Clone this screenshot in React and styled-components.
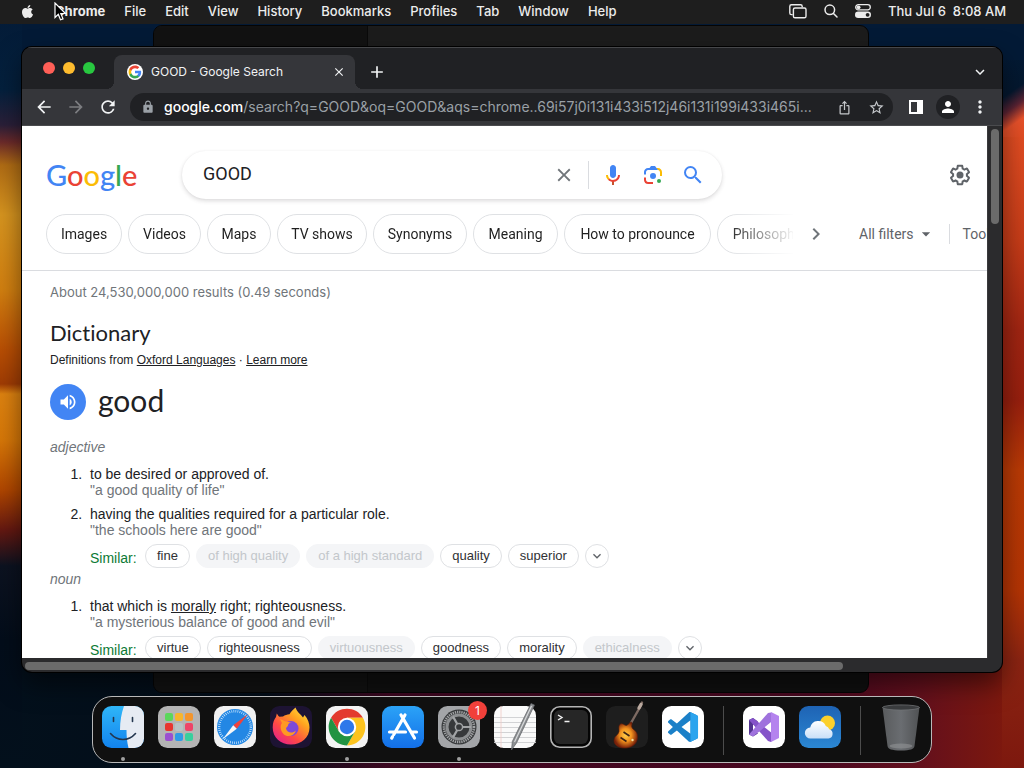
import React from "react";
import styled, { createGlobalStyle, css } from "styled-components";
import { FaApple } from "react-icons/fa";
import {
  MdAdd,
  MdArrowBack,
  MdArrowDropDown,
  MdArrowForward,
  MdClose,
  MdExpandMore,
  MdIosShare,
  MdLock,
  MdMoreVert,
  MdNavigateNext,
  MdPerson,
  MdRefresh,
  MdSearch,
  MdStarBorder,
  MdVolumeUp,
} from "react-icons/md";

const mac = `Inter, "Liberation Sans", sans-serif`;
const product = `Roboto, "Liberation Sans", sans-serif`;
const display = `Lato, "Liberation Sans", sans-serif`;
const arial = `"Liberation Sans", Arial, sans-serif`;

const GlobalStyle = createGlobalStyle`
  *, *::before, *::after { box-sizing: border-box; }
  body { margin: 0; background: #04101f; }
  button, input { font: inherit; color: inherit; }
  button { border: 0; padding: 0; background: none; }
  a { color: inherit; }
  svg { display: block; flex: none; }
`;

/* ---------- desktop ---------- */

const Desktop = styled.div`
  min-height: 100vh;
  display: flex;
  flex-direction: column;
  overflow: hidden;
  font-family: ${mac};
  background:
    linear-gradient(180deg, #031a36 0, #04203d 90px, #2a1f38 125px, #6b2a2a 142px, #b06c14 165px, #d6941f 215px, #d17f10 290px, #b84e04 350px, #a03c04 384px, #dd8210 394px, #d67708 440px, #b04600 490px, #641811 530px, #0c1220 566px, #030d1a 640px, #03101c 100%) left top / 22px 100% no-repeat,
    linear-gradient(180deg, #031a36 0, #031a36 100%) left top / 100% 60px no-repeat,
    linear-gradient(145deg, #031a36 0, #04182f 42px, #5b2333 56px, #e8512a 70px, #e04c22 100%) right 47px / 22px 90px no-repeat,
    linear-gradient(180deg, #031a36 0, #031a36 100px, #e04c22 137px, #c63c18 240px, #a02512 330px, #971f0e 400px, #b93a05 470px, #b43404 590px, #8b2412 660px, #7d180e 100%) right top / 22px 100% no-repeat,
    linear-gradient(90deg, #03101c 0, #030d18 26%, #3c0720 38%, #4a0820 80%, #64101c 90%, #7d180e 98%);
`;

const MenuBar = styled.header`
  height: 24px;
  flex: none;
  display: flex;
  align-items: center;
  justify-content: space-between;
  padding: 0 18px 2px 20px;
  background: #1e1e1e;
  color: #ececec;
  font-size: 13px;
  line-height: 16px;
  font-weight: 500;
  white-space: nowrap;
`;

const MenuList = styled.nav`
  display: flex;
  align-items: center;
  gap: 19px;
`;

const MenuItem = styled.button`
  font-weight: ${(p) => (p.$app ? 700 : 500)};
`;

const AppleMenu = styled(MenuItem)`
  padding-right: 1px;
`;

const StatusList = styled.div`
  display: flex;
  align-items: center;
  gap: 17px;
  white-space: pre;
`;

const Pointer = styled.svg`
  position: absolute;
  left: 54px;
  top: 2px;
  z-index: 5;
`;

const Stage = styled.main`
  position: relative;
  flex: 1;
  display: flex;
  padding: 23px 22px 24px;
`;

const BackWindow = styled.div`
  position: absolute;
  inset: 1px 155px 3px 153px;
  display: flex;
  border-radius: 9px;
  border: 1px solid #050505;
  background: linear-gradient(180deg, #1c1c1c 0, #1c1c1c 60px, #101010 100px);
  overflow: hidden;

  &::before {
    content: "";
    width: 30%;
    background: #121212;
    border-right: 1px solid #0a0a0a;
  }
`;

/* ---------- browser window ---------- */

const Browser = styled.section`
  position: relative;
  flex: 1;
  min-width: 0;
  display: flex;
  flex-direction: column;
  border-radius: 10px;
  overflow: hidden;
  background: #2b2b2d;
  box-shadow: 0 0 0 1px #000, 0 12px 26px rgba(0, 0, 0, 0.5);
`;

const TabStrip = styled.div`
  height: 42px;
  flex: none;
  display: flex;
  align-items: flex-end;
  background: #202124;
  border-top: 1px solid #46474a;
  padding-right: 12px;
`;

const Lights = styled.div`
  display: flex;
  align-self: center;
  gap: 8px;
  width: 92px;
  padding: 0 0 2px 21px;
`;

const Light = styled.button`
  width: 12px;
  height: 12px;
  border-radius: 50%;
  background: ${(p) => p.$color};
`;

const Tab = styled.div`
  position: relative;
  width: 241px;
  height: 34px;
  display: flex;
  align-items: center;
  gap: 8px;
  padding: 0 9px 0 13px;
  border-radius: 8px 8px 0 0;
  background: #35363a;
  color: #f1f3f4;
  font-size: 12px;
  line-height: 16px;

  &::before,
  &::after {
    content: "";
    position: absolute;
    bottom: 0;
    width: 8px;
    height: 8px;
  }
  &::before {
    right: 100%;
    background: radial-gradient(circle at 0 0, transparent 8px, #35363a 8px);
  }
  &::after {
    left: 100%;
    background: radial-gradient(circle at 100% 0, transparent 8px, #35363a 8px);
  }
`;

const Favicon = styled.span`
  width: 16px;
  height: 16px;
  border-radius: 50%;
  display: grid;
  place-items: center;
  background: #fff;
`;

const TabTitle = styled.span`
  flex: 1;
  white-space: nowrap;
`;

const IconButton = styled.button`
  width: ${(p) => p.$size || 24}px;
  height: ${(p) => p.$size || 24}px;
  flex: none;
  display: grid;
  place-items: center;
  border-radius: 50%;
  color: ${(p) => p.$color || "#f1f3f4"};
  background: ${(p) => p.$bg || "none"};
`;

const StripActions = styled.div`
  flex: 1;
  height: 34px;
  display: flex;
  align-items: center;
  justify-content: space-between;
  padding-left: 10px;
`;

const Toolbar = styled.div`
  height: 37px;
  flex: none;
  display: flex;
  align-items: center;
  gap: 8px;
  padding: 0 10px;
  background: #35363a;
  border-bottom: 1px solid #4a4b4e;
`;

const Omnibox = styled.div`
  flex: 1;
  min-width: 0;
  height: 28px;
  display: flex;
  align-items: center;
  margin: 0 3px 0 2px;
  padding: 0 5px 0 11px;
  border-radius: 14px;
  background: #202124;
  font-size: 14px;
  line-height: 20px;
`;

const Host = styled.label`
  padding-left: 9px;
  color: #fff;
  font-weight: 500;
`;

const UrlInput = styled.input`
  flex: 1;
  min-width: 0;
  margin-right: 8px;
  padding: 0;
  border: 0;
  outline: 0;
  background: none;
  color: #9aa0a6;
  text-overflow: ellipsis;
`;

const OmniActions = styled.div`
  display: flex;
  gap: 8px;
`;

const Viewport = styled.div`
  flex: 1;
  min-height: 0;
  display: grid;
  grid-template: minmax(0, 1fr) 14px / minmax(0, 1fr) 15px;
`;

const VTrack = styled.div`
  padding: 3px 3px 0;
  border-left: 1px solid #3a3a3c;
  &::before {
    content: "";
    display: block;
    height: 18%;
    border-radius: 4px;
    background: #6b6b6b;
  }
`;

const HTrack = styled.div`
  grid-column: 1 / -1;
  padding: 4px 3px 2px;
  &::before {
    content: "";
    display: block;
    width: 84%;
    height: 8px;
    border-radius: 4px;
    background: #6b6b6b;
  }
`;

/* ---------- results page ---------- */

const Page = styled.div`
  background: #fff;
  overflow: hidden;
  color: #202124;
  height: 532px;
  min-height: 100%;
`;

const PageHeader = styled.div`
  border-bottom: 1px solid #dadce0;
  padding: 25px 0 16px 24px;
`;

const SearchRow = styled.div`
  display: flex;
  align-items: center;
  padding-right: 15px;
`;

const Logo = styled.a`
  width: 136px;
  font-family: ${display};
  font-size: 29px;
  font-weight: 500;
  line-height: 40px;
  text-decoration: none;
`;

const Letter = styled.span`
  color: ${(p) => p.$color};
`;

const SearchBox = styled.form`
  width: 540px;
  height: 48px;
  display: flex;
  align-items: center;
  padding: 0 17px 0 21px;
  border-radius: 24px;
  background: #fff;
  box-shadow: 0 2px 4px rgba(64, 60, 67, 0.18), 0 0 2px rgba(64, 60, 67, 0.06);
`;

const SearchInput = styled.input`
  flex: 1;
  min-width: 0;
  padding: 0 0 2px;
  border: 0;
  outline: 0;
  background: none;
  font-family: ${product};
  font-size: 18px;
  line-height: 24px;
`;

const SearchTools = styled.div`
  display: flex;
  align-items: center;
  gap: 16px;
`;

const Divider = styled.span`
  width: 1px;
  height: ${(p) => p.$h}px;
  background: #dadce0;
`;

const SearchDivider = styled(Divider)`
  margin: 0 -4px;
`;

const HeaderEnd = styled.div`
  margin-left: auto;
`;

const FilterRow = styled.div`
  display: flex;
  align-items: center;
  margin-top: 15px;
  font-family: ${product};
  font-size: 14px;
  line-height: 20px;
  color: #5f6368;
  white-space: nowrap;
`;

const ChipScroller = styled.div`
  width: 747px;
  flex: none;
  display: flex;
  gap: 6px;
  overflow: hidden;
  color: #1f1f1f;
  mask-image: linear-gradient(90deg, #000 680px, transparent 750px);
`;

const FilterChip = styled.button`
  flex: none;
  width: ${(p) => p.$w}px;
  height: 40px;
  border: 1px solid #dfe1e4;
  border-radius: 20px;
`;

const FilterTools = styled.div`
  display: flex;
  align-items: center;
  gap: 13px;
  margin-left: 11px;
`;

const AllFilters = styled.button`
  display: flex;
  align-items: center;
  gap: 2px;
  margin-left: 18px;
`;

const Results = styled.div`
  padding: 12px 28px 0;
  font-family: ${arial};
  font-size: 14px;
  line-height: 16px;
`;

const Stats = styled.p`
  margin: 0;
  font-family: ${mac};
  font-size: 13px;
  line-height: 18px;
  color: #70757a;
`;

const SectionTitle = styled.h2`
  margin: 16px 0 0;
  font-family: ${display};
  font-weight: 400;
  font-size: 22px;
  line-height: 32px;
  font-variant-ligatures: none;
`;

const Source = styled.p`
  margin: 3px 0 0;
  font-size: 12px;
  line-height: 16px;
`;

const WordRow = styled.div`
  display: flex;
  align-items: center;
  gap: 12px;
  height: 36px;
  margin-top: 16px;
`;

const Word = styled.h3`
  margin: 0;
  padding-bottom: 4px;
  font-family: ${display};
  font-weight: 400;
  font-size: 30px;
  line-height: 36px;
`;

const PartOfSpeech = styled.p`
  margin: ${(p) => (p.$first ? 19 : 3)}px 0 0;
  font-style: italic;
  color: #70757a;
`;

const Senses = styled.ol`
  margin: 11px 0 0;
  padding: 0 0 0 40px;
`;

const Sense = styled.li`
  &::marker {
    content: counter(list-item) ".\\00a0\\00a0";
  }
  & + & {
    margin-top: 8px;
  }
`;

const Example = styled.div`
  color: #70757a;
`;

const SimilarRow = styled.div`
  display: flex;
  align-items: center;
  gap: 6px;
  margin-top: 6px;
`;

const SimilarLabel = styled.span`
  width: 49px;
  padding-top: 4px;
  color: #0d7a35;
`;

const muted = css`
  color: #c3c7cb;
  background: #f4f5f7;
  border-color: #f4f5f7;
`;

const WordChip = styled.button`
  height: 24px;
  padding: 0 11px;
  border: 1px solid #dfe1e4;
  border-radius: 12px;
  font-size: 13px;
  line-height: 16px;
  color: #303134;
  ${(p) => p.$muted && muted}
`;

const MoreChip = styled.button`
  width: 24px;
  height: 24px;
  display: grid;
  place-items: center;
  border: 1px solid #dfe1e4;
  border-radius: 50%;
  color: #5f6368;
`;

/* ---------- dock ---------- */

const Dock = styled.nav`
  position: relative;
  align-self: center;
  flex: none;
  display: flex;
  gap: 14px;
  height: 67px;
  margin: 0 0 5px;
  padding: 9px 9px 0;
  border: 1px solid #b9b9b9;
  border-radius: 20px;
  background: #101010;
`;

const DockApp = styled.button`
  position: relative;
  width: 42px;
  height: 42px;
`;

const RunningDot = styled.span`
  position: absolute;
  left: 19px;
  top: 51px;
  width: 4px;
  height: 4px;
  border-radius: 50%;
  background: #a0a0a0;
`;

const Badge = styled.span`
  position: absolute;
  right: -7px;
  top: -5px;
  width: 19px;
  height: 19px;
  border-radius: 50%;
  background: #f1403a;
  color: #fff;
  font-size: 12px;
  line-height: 19px;
  text-align: center;
`;

const DockRule = styled.span`
  width: 1px;
  height: 49px;
  margin: 0 5px;
  background: #4c4c4c;
`;

/* ---------- drawings ---------- */

const GoogleG = ({ size }) => (
  <svg width={size} height={size} viewBox="0 0 24 24">
    <path fill="#4285F4" d="M22.56 12.25c0-.78-.07-1.53-.2-2.25H12v4.26h5.92c-.26 1.37-1.04 2.53-2.21 3.31v2.77h3.57c2.08-1.92 3.28-4.74 3.28-8.09z" />
    <path fill="#34A853" d="M12 23c2.97 0 5.46-.98 7.28-2.66l-3.57-2.77c-.98.66-2.23 1.06-3.71 1.06-2.86 0-5.29-1.93-6.16-4.53H2.18v2.84C3.99 20.53 7.7 23 12 23z" />
    <path fill="#FBBC05" d="M5.84 14.09c-.22-.69-.35-1.36-.35-2.09s.13-1.43.35-2.09V7.07H2.18C1.43 8.55 1 10.22 1 12s.43 3.45 1.18 4.93l2.85-2.22.81-.62z" />
    <path fill="#EA4335" d="M12 5.38c1.62 0 3.06.56 4.21 1.64l3.15-3.15C17.45 2.09 14.97 1 12 1 7.7 1 3.99 3.47 2.18 7.07l3.66 2.84c.87-2.6 3.3-4.53 6.16-4.53z" />
  </svg>
);

const MicIcon = () => (
  <svg width="24" height="24" viewBox="0 0 24 24">
    <path fill="#4285f4" d="m12 15c1.66 0 3-1.31 3-2.97v-7.02c0-1.66-1.34-3.01-3-3.01s-3 1.34-3 3.01v7.02c0 1.66 1.34 2.97 3 2.97z" />
    <path fill="#c5532d" d="m11 18.08h2v3.92h-2z" />
    <path fill="#fbbc04" d="m7.05 16.87c-1.27-1.33-2.05-2.83-2.05-4.87h2c0 1.45 0.56 2.42 1.47 3.38v0.32l-1.15 1.18z" />
    <path fill="#ea4335" d="m12 16.93a4.97 5.25 0 0 1 -3.54 -1.55l-1.41 1.49c1.26 1.34 3.02 2.13 4.95 2.13 3.87 0 6.99-2.92 6.99-7h-1.99c0 2.92-2.24 4.93-5 4.93z" />
  </svg>
);

const LensIcon = () => (
  <svg width="24" height="24" viewBox="0 0 192 192">
    <circle fill="#34a853" cx="144.07" cy="144" r="16" />
    <circle fill="#4285f4" cx="96.07" cy="104" r="24" />
    <path fill="#ea4335" d="M24,135.2c0,18.11,14.69,32.8,32.8,32.8H96v-16l-40.1-0.1c-8.8,0-15.9-8.19-15.9-17.9v-18H24V135.2z" />
    <path fill="#fbbc04" d="M168,72.8c0-18.11-14.69-32.8-32.8-32.8H116l20,16c8.8,0,16,8.29,16,18v30h16V72.8z" />
    <path fill="#4285f4" d="M112,24l-32,0L68,40H56.8C38.69,40,24,54.69,24,72.8V92h16V74c0-9.71,7.2-18,16-18h80L124,40L112,24z" />
  </svg>
);

const GearIcon = () => (
  <svg width="24" height="24" viewBox="0 0 24 24" fill="currentColor">
    <path d="M13.85 22.25h-3.7c-.74 0-1.36-.54-1.45-1.27l-.27-1.89c-.27-.14-.53-.29-.79-.46l-1.8.72c-.7.26-1.47-.03-1.81-.65L2.2 15.53c-.35-.66-.2-1.44.36-1.88l1.53-1.19c-.01-.15-.02-.3-.02-.46 0-.15.01-.31.02-.46l-1.52-1.19c-.59-.45-.74-1.26-.37-1.88l1.85-3.19c.34-.62 1.11-.9 1.79-.63l1.81.73c.26-.17.52-.32.78-.46l.27-1.91c.09-.7.71-1.25 1.44-1.25h3.7c.74 0 1.36.54 1.45 1.27l.27 1.89c.27.14.53.29.79.46l1.8-.72c.71-.26 1.48.03 1.82.65l1.84 3.18c.36.66.2 1.44-.36 1.88l-1.52 1.19c.01.15.02.3.02.46s-.01.31-.02.46l1.52 1.19c.56.45.72 1.23.37 1.86l-1.86 3.22c-.34.62-1.11.9-1.8.63l-1.8-.72c-.26.17-.52.32-.78.46l-.27 1.91c-.1.68-.72 1.22-1.46 1.22zm-3.23-2h2.76l.37-2.55.53-.22c.44-.18.88-.44 1.34-.78l.45-.34 2.38.96 1.38-2.4-2.03-1.58.07-.56c.03-.26.06-.51.06-.78s-.03-.53-.06-.78l-.07-.56 2.03-1.58-1.39-2.4-2.39.96-.45-.35c-.42-.32-.87-.58-1.33-.77l-.52-.22-.37-2.55h-2.76l-.37 2.55-.53.21c-.44.19-.88.44-1.34.79l-.45.33-2.38-.95-1.39 2.39 2.03 1.58-.07.56a7 7 0 0 0-.06.79c0 .26.02.53.06.78l.07.56-2.03 1.58 1.38 2.4 2.39-.96.45.35c.43.33.86.58 1.33.77l.53.22.38 2.55z" />
    <circle cx="12" cy="12" r="3.5" />
  </svg>
);

const StackIcon = () => (
  <svg width="18" height="15" viewBox="0 0 18 15" fill="none" stroke="#ececec" strokeWidth="1.4">
    <path d="M3.6 10.6H2.4C1.4 10.6.8 10 .8 9V2.400C.8 1.400 1.400.8 2.400.8h9.200c1 0 1.600.6 1.600 1.600v.8" />
    <rect x="4.400" y="4" width="12.600" height="9.800" rx="1.600" />
  </svg>
);

const ControlIcon = () => (
  <svg width="16" height="14" viewBox="0 0 16 14">
    <rect x=".7" y=".7" width="14.600" height="5.200" rx="2.600" fill="none" stroke="#ececec" strokeWidth="1.300" />
    <circle cx="3.600" cy="3.300" r="1.900" fill="#ececec" />
    <rect x="0" y="7.600" width="16" height="6.400" rx="3.200" fill="#ececec" />
    <circle cx="12.600" cy="10.800" r="1.900" fill="#1e1e1e" />
  </svg>
);

const MagnifierIcon = () => (
  <svg width="14" height="14" viewBox="0 0 14 14" fill="none" stroke="#ececec" strokeWidth="1.500" strokeLinecap="round">
    <circle cx="5.800" cy="5.800" r="4.800" />
    <path d="M9.500 9.500 13 13" />
  </svg>
);

const SidePanelIcon = () => (
  <svg width="14" height="14" viewBox="0 0 14 14">
    <path fill="#fff" fillRule="evenodd" d="M0 0h14v14H0zM2 2v10h6V2z" />
  </svg>
);

const PointerIcon = () => (
  <Pointer width="13" height="20" viewBox="0 0 13 20">
    <path d="M1 1v14.500l3.300-3.100 2.200 5.400 2.500-1-2.200-5.300h4.700z" fill="#000" stroke="#fff" strokeWidth="1.200" />
  </Pointer>
);

const Art = ({ children }) => (
  <svg width="42" height="42" viewBox="0 0 42 42" overflow="visible">
    {children}
  </svg>
);

const FinderArt = () => (
  <Art>
    <defs>
      <linearGradient id="finderBlue" x2="0" y2="1"><stop stopColor="#2fb6f8" /><stop offset="1" stopColor="#1283ee" /></linearGradient>
      <clipPath id="finderClip"><rect width="42" height="42" rx="9.500" /></clipPath>
    </defs>
    <g clipPath="url(#finderClip)">
      <rect width="42" height="42" fill="url(#finderBlue)" />
      <path d="M22 0c-2.500 7-4 15-4 24h6.500c0 6 .5 12 2 18H42V0z" fill="#e6ebf3" />
      <path d="M11.500 11.500v4M30.500 11.500v4" stroke="#23364e" strokeWidth="1.600" strokeLinecap="round" />
      <path d="M8.500 27.500c7 8 18 8 25 0" fill="none" stroke="#23364e" strokeWidth="1.600" strokeLinecap="round" />
    </g>
  </Art>
);

const tiles = ["#5bd75b", "#f7b52c", "#f3952c", "#e8352f", "#b8c2c4", "#ee4468", "#9b4fd0", "#2f9be6", "#38cf9d"];

const LaunchpadArt = () => (
  <Art>
    <rect width="42" height="42" rx="9.500" fill="#b4b4b4" />
    {tiles.map((c, i) => (
      <rect key={c} x={7 + (i % 3) * 10} y={7 + Math.floor(i / 3) * 10} width="8" height="8" rx="2" fill={c} />
    ))}
  </Art>
);

const SafariArt = () => (
  <Art>
    <rect width="42" height="42" rx="9.500" fill="#f1f1f1" />
    <circle cx="21" cy="21" r="18" fill="#2387e4" />
    <circle cx="21" cy="21" r="15.800" fill="none" stroke="#d5ecff" strokeWidth="2.400" strokeDasharray=".7 1.370" />
    <path d="M34 8 22.800 22.800 19.200 19.200z" fill="#f0423c" />
    <path d="M8.500 33.500 19.200 19.200l3.600 3.600z" fill="#f7f7f7" />
  </Art>
);

const FirefoxArt = () => (
  <Art>
    <defs>
      <linearGradient id="foxFire" x1="1" x2=".2" y2="1"><stop stopColor="#fff04a" /><stop offset=".35" stopColor="#ffa51f" /><stop offset=".7" stopColor="#ff4a45" /><stop offset="1" stopColor="#e5208a" /></linearGradient>
    </defs>
    <rect width="42" height="42" rx="9.500" fill="#1d1333" />
    <path d="M25.500 1.500c1.500 4.500 5 6.500 7.500 10l1.500-2.500c3.500 4 5 8.500 5 12.500 0 10-8 17-18.500 17S2.700 31.500 2.700 21.500c0-5 1.500-8 3.300-10.500l.8-3.500c1 1.500 1.600 2.500 2.700 3.300l3.500-.3c2-1.300 4-2 6.500-2.200 1.500-3 4-5 6-6.800z" fill="url(#foxFire)" />
    <circle cx="21" cy="22.500" r="7.500" fill="#8147d8" />
    <path d="M10 13c4 1.500 6 3 12 3.500-1 3-5 3-6 6 1 5 7 5 10 2-2 6-9 7-12.500 3.500C10 24.500 10 19 12 17z" fill="#ff9a22" />
    <circle cx="22" cy="20.500" r="4.200" fill="#7c4ad9" />
  </Art>
);

const ChromeArt = () => (
  <Art>
    <rect width="42" height="42" rx="9.500" fill="#f3f3f3" />
    <g transform="translate(21 21)">
      <path d="M-15.900-9.200A18.400 18.400 0 0 1 15.900-9.200L0-9.200-8 4.600z" fill="#e33b2e" />
      <path d="M15.900-9.200A18.400 18.400 0 0 1 0 18.400L8 4.600 0-9.200z" fill="#fcc31e" />
      <path d="M0 18.400A18.400 18.400 0 0 1-15.900-9.200L-8 4.600 8 4.600z" fill="#229342" />
      <circle r="9.200" fill="#fff" />
      <circle r="7.200" fill="#2d78ea" />
    </g>
  </Art>
);

const AppStoreArt = () => (
  <Art>
    <defs>
      <linearGradient id="storeBlue" x2="0" y2="1"><stop stopColor="#2ba3f7" /><stop offset="1" stopColor="#136fe8" /></linearGradient>
    </defs>
    <rect width="42" height="42" rx="9.500" fill="url(#storeBlue)" />
    <g stroke="#fff" strokeWidth="3.200" strokeLinecap="round">
      <path d="M23 9 11.800 28.500M19 9l13.500 23M7.500 26h16M29.500 26h5M10.500 30.700l-.8 1.400" />
    </g>
  </Art>
);

const SettingsArt = () => (
  <Art>
    <rect width="42" height="42" rx="9.500" fill="#a3a5a8" />
    <circle cx="21" cy="21" r="17.500" fill="#37393b" />
    <circle cx="21" cy="21" r="15" fill="none" stroke="#a2a4a6" strokeWidth="2.600" strokeDasharray="1.300 .9" />
    <circle cx="21" cy="21" r="12" fill="none" stroke="#8d8f91" strokeWidth="3" />
    <path d="M21 21 15 10.600M21 21 15 31.400M21 21h12" stroke="#a2a4a6" strokeWidth="2.200" />
    <circle cx="21" cy="21" r="3.600" fill="#37393b" stroke="#a2a4a6" strokeWidth="1.500" />
  </Art>
);

const TextEditArt = () => (
  <Art>
    <rect width="42" height="42" rx="9.500" fill="#fafafa" />
    <path d="M0 11.500h42M0 16.500h42M0 21.500h42M0 26.500h42M0 31.500h42M0 36.500h42" stroke="#cdced0" strokeWidth=".9" />
    <path d="M7 0v42" stroke="#efc9c4" strokeWidth=".8" />
    <path d="M37-2.500 40.500-1 22.500 37l-5 7 .8-8.500z" fill="#8c8f92" stroke="#5f6265" strokeWidth=".7" />
    <path d="M37.500 0 20.500 36" stroke="#d8dadc" strokeWidth="1.200" />
  </Art>
);

const TerminalArt = () => (
  <Art>
    <rect x=".8" y=".8" width="40.400" height="40.400" rx="9" fill="#050505" stroke="#b5b5b5" strokeWidth="1.600" />
    <rect x="4" y="4" width="34" height="34" rx="6" fill="#262626" />
    <path d="m8 9 4 2.500L8 14M14.500 15.500h5" fill="none" stroke="#f2f2f2" strokeWidth="1.400" />
  </Art>
);

const GarageArt = () => (
  <Art>
    <defs>
      <radialGradient id="guitar"><stop stopColor="#ffd04a" /><stop offset=".5" stopColor="#f2911e" /><stop offset="1" stopColor="#7a220a" /></radialGradient>
    </defs>
    <rect width="42" height="42" rx="9.500" fill="#1e1e1e" />
    <path d="M36-3.500 33.500 2 21 24" fill="none" stroke="#7d6a62" strokeWidth="2.400" strokeLinecap="round" />
    <path d="M35-1.500 33 2" stroke="#b9a89e" strokeWidth="3.400" strokeLinecap="round" />
    <path d="M14.500 18c2.500-1 3.500 1.500 6 1.500 1.500 0 2.500-3 5-3.500 1.500 2-1 4 1 6.500 2 2 5 3 5 8.500 0 6.500-5 10.500-11.500 11-6.500.5-12-2.500-12-7.500 0-4.500 4.500-5.500 5-9 .3-2.500-1-6 1.500-7.500z" fill="url(#guitar)" stroke="#5c1c08" strokeWidth=".6" />
    <path d="m17.500 26 6 4M14.500 31.500l6 4" stroke="#3d2316" strokeWidth="1.600" />
    <circle cx="26.500" cy="34" r="1.200" fill="#f5e3a5" />
  </Art>
);

const VSCodeArt = () => (
  <Art>
    <rect width="42" height="42" rx="9.500" fill="#fff" />
    <g transform="translate(6 6) scale(.3)">
      <path fillRule="evenodd" fill="#1b80c8" d="M71 99.300c1.600.6 3.400.6 5-.2l20.600-9.900c2.100-1 3.500-3.200 3.500-5.600V16.400c0-2.400-1.400-4.600-3.500-5.600L76 .9c-2.100-1-4.500-.8-6.400.6L29.600 38 12.200 24.800c-1.600-1.200-3.900-1.100-5.400.2L1.200 30c-1.800 1.700-1.800 4.500 0 6.200L16.300 50 1.200 63.800c-1.800 1.700-1.800 4.500 0 6.200l5.600 5.100c1.500 1.400 3.800 1.500 5.400.2L29.600 62 69 98.100c.6.5 1.300 1 2 1.200zM75 27.300 45.100 50 75 72.700z" />
      <path fill="#2ba4ee" d="M75 1v98l21.600-9.800c2.100-1 3.500-3.200 3.500-5.600V16.400c0-2.400-1.400-4.600-3.500-5.600z" />
    </g>
  </Art>
);

const VisualStudioArt = () => (
  <Art>
    <rect width="42" height="42" rx="9.500" fill="#fff" />
    <path d="m6 14 4-2 5 3.500-5 3.500v5l5 3.500-5 3-4-2z" fill="#52338f" />
    <path d="M6 14 10 12 32 29.500 28 36 25 35z" fill="#8553c9" />
    <path d="m6 28.500 4 2L32 13 28 6.500 25 7z" fill="#9f72dd" />
    <path d="m28 6 8 4v22l-8 4z" fill="#b483ee" />
    <path d="M28 16.500v9L22.500 21z" fill="#fff" />
  </Art>
);

const WeatherArt = () => (
  <Art>
    <defs>
      <linearGradient id="sky" x2="0" y2="1"><stop stopColor="#1e63b4" /><stop offset="1" stopColor="#2b87d3" /></linearGradient>
      <linearGradient id="cloud" x2="0" y2="1"><stop stopColor="#fff" /><stop offset="1" stopColor="#c9dff8" /></linearGradient>
    </defs>
    <rect width="42" height="42" rx="9.500" fill="url(#sky)" />
    <circle cx="28.500" cy="17" r="7.500" fill="#fbd02c" />
    <path d="M11.500 32.500a5.500 5.500 0 0 1-.3-11 8.200 8.200 0 0 1 15.600-1.500 5 5 0 0 1 3.500 3.200 4.800 4.800 0 0 1-.8 9.300z" fill="url(#cloud)" />
  </Art>
);

const TrashArt = () => (
  <Art>
    <defs>
      <linearGradient id="bin"><stop stopColor="#595b5d" /><stop offset=".5" stopColor="#6a6d71" /><stop offset="1" stopColor="#505254" /></linearGradient>
    </defs>
    <path d="M2.500 1 7.500 40c.4 3 4 4.500 13.500 4.500S34.100 43 34.500 40l5-39z" fill="url(#bin)" />
    <ellipse cx="21" cy="1.500" rx="18.500" ry="2.600" fill="#3a3c3e" stroke="#6f7173" strokeWidth=".8" />
    <ellipse cx="21" cy="40" rx="11.500" ry="2.500" fill="#9a9c9e" opacity=".5" />
  </Art>
);

/* ---------- data ---------- */

const menus = ["File", "Edit", "View", "History", "Bookmarks", "Profiles", "Tab", "Window", "Help"];

const filters = [
  ["Images", 76],
  ["Videos", 73],
  ["Maps", 64],
  ["TV shows", 90],
  ["Synonyms", 94],
  ["Meaning", 85],
  ["How to pronounce", 147],
  ["Philosophy", 100],
];

const logo = [
  ["G", "#4285f4"],
  ["o", "#ea4335"],
  ["o", "#fbbc05"],
  ["g", "#4285f4"],
  ["l", "#34a853"],
  ["e", "#ea4335"],
];

const dockGroups = [
  [
    { name: "Finder", Icon: FinderArt, running: true },
    { name: "Launchpad", Icon: LaunchpadArt },
    { name: "Safari", Icon: SafariArt },
    { name: "Firefox", Icon: FirefoxArt },
    { name: "Chrome", Icon: ChromeArt, running: true },
    { name: "App Store", Icon: AppStoreArt },
    { name: "System Settings", Icon: SettingsArt, running: true, badge: 1 },
    { name: "TextEdit", Icon: TextEditArt },
    { name: "Terminal", Icon: TerminalArt },
    { name: "GarageBand", Icon: GarageArt },
    { name: "Visual Studio Code", Icon: VSCodeArt },
  ],
  [
    { name: "Visual Studio", Icon: VisualStudioArt },
    { name: "Weather", Icon: WeatherArt },
  ],
  [{ name: "Trash", Icon: TrashArt }],
];

const Similar = ({ words }) => (
  <SimilarRow>
    <SimilarLabel>Similar:</SimilarLabel>
    {words.map(([word, off]) => (
      <WordChip key={word} $muted={off} disabled={off}>
        {word}
      </WordChip>
    ))}
    <MoreChip aria-label="More similar words">
      <MdExpandMore size={16} />
    </MoreChip>
  </SimilarRow>
);

export default function App() {
  return (
    <Desktop>
      <GlobalStyle />
      <PointerIcon />
      <MenuBar>
        <MenuList>
          <AppleMenu aria-label="Apple menu">
            <FaApple size={15} />
          </AppleMenu>
          <MenuItem $app>Chrome</MenuItem>
          {menus.map((m) => (
            <MenuItem key={m}>{m}</MenuItem>
          ))}
        </MenuList>
        <StatusList>
          <StackIcon />
          <MagnifierIcon />
          <ControlIcon />
          <span>{"Thu Jul 6  8:08 AM"}</span>
        </StatusList>
      </MenuBar>

      <Stage>
        <BackWindow />
        <Browser>
          <TabStrip>
            <Lights>
              <Light $color="#ff5f57" aria-label="Close window" />
              <Light $color="#febc2e" aria-label="Minimize window" />
              <Light $color="#28c840" aria-label="Zoom window" />
            </Lights>
            <Tab>
              <Favicon>
                <GoogleG size={14} />
              </Favicon>
              <TabTitle>GOOD - Google Search</TabTitle>
              <IconButton $size={14} aria-label="Close tab">
                <MdClose size={14} />
              </IconButton>
            </Tab>
            <StripActions>
              <IconButton aria-label="New tab">
                <MdAdd size={20} />
              </IconButton>
              <IconButton $size={20} aria-label="Search tabs">
                <MdExpandMore size={18} />
              </IconButton>
            </StripActions>
          </TabStrip>

          <Toolbar>
            <IconButton aria-label="Back">
              <MdArrowBack size={20} />
            </IconButton>
            <IconButton aria-label="Forward" $color="#7c7d80">
              <MdArrowForward size={20} />
            </IconButton>
            <IconButton aria-label="Reload">
              <MdRefresh size={20} />
            </IconButton>
            <Omnibox>
              <MdLock size={14} color="#9aa0a6" />
              <Host htmlFor="address">google.com</Host>
              <UrlInput
                id="address"
                defaultValue="/search?q=GOOD&oq=GOOD&aqs=chrome..69i57j0i131i433i512j46i131i199i433i465i..."
              />
              <OmniActions>
                <IconButton aria-label="Share" $color="#c4c7ca">
                  <MdIosShare size={15} />
                </IconButton>
                <IconButton aria-label="Bookmark" $color="#c4c7ca">
                  <MdStarBorder size={17} />
                </IconButton>
              </OmniActions>
            </Omnibox>
            <IconButton aria-label="Side panel">
              <SidePanelIcon />
            </IconButton>
            <IconButton aria-label="Profile" $bg="#202124" $color="#fff">
              <MdPerson size={18} />
            </IconButton>
            <IconButton aria-label="Chrome menu">
              <MdMoreVert size={20} />
            </IconButton>
          </Toolbar>

          <Viewport>
            <Page>
              <PageHeader>
                <SearchRow>
                  <Logo href="#home" aria-label="Google">
                    {logo.map(([l, c], i) => (
                      <Letter key={i} $color={c}>
                        {l}
                      </Letter>
                    ))}
                  </Logo>
                  <SearchBox onSubmit={(e) => e.preventDefault()}>
                    <SearchInput aria-label="Search" defaultValue="GOOD" />
                    <SearchTools>
                      <IconButton type="button" aria-label="Clear" $color="#70757a">
                        <MdClose size={22} />
                      </IconButton>
                      <SearchDivider $h={28} />
                      <IconButton type="button" aria-label="Search by voice">
                        <MicIcon />
                      </IconButton>
                      <IconButton type="button" aria-label="Search by image">
                        <LensIcon />
                      </IconButton>
                      <IconButton aria-label="Submit search" $color="#4285f4">
                        <MdSearch size={24} />
                      </IconButton>
                    </SearchTools>
                  </SearchBox>
                  <HeaderEnd>
                    <IconButton aria-label="Settings" $color="#5f6368">
                      <GearIcon />
                    </IconButton>
                  </HeaderEnd>
                </SearchRow>
                <FilterRow>
                  <ChipScroller>
                    {filters.map(([label, w]) => (
                      <FilterChip key={label} $w={w}>
                        {label}
                      </FilterChip>
                    ))}
                  </ChipScroller>
                  <FilterTools>
                    <IconButton aria-label="More filters" $color="#70757a">
                      <MdNavigateNext size={24} />
                    </IconButton>
                    <AllFilters>
                      All filters
                      <MdArrowDropDown size={20} />
                    </AllFilters>
                    <Divider $h={20} />
                    <button>Tools</button>
                  </FilterTools>
                </FilterRow>
              </PageHeader>

              <Results>
                <Stats>About 24,530,000,000 results (0.49 seconds)</Stats>
                <SectionTitle>Dictionary</SectionTitle>
                <Source>
                  Definitions from <a href="#oxford">Oxford Languages</a> · <a href="#learn">Learn more</a>
                </Source>
                <WordRow>
                  <IconButton $size={36} $bg="#4285f4" $color="#fff" aria-label="Listen">
                    <MdVolumeUp size={20} />
                  </IconButton>
                  <Word>good</Word>
                </WordRow>

                <PartOfSpeech $first>adjective</PartOfSpeech>
                <Senses>
                  <Sense>
                    to be desired or approved of.
                    <Example>"a good quality of life"</Example>
                  </Sense>
                  <Sense>
                    having the qualities required for a particular role.
                    <Example>"the schools here are good"</Example>
                    <Similar
                      words={[
                        ["fine"],
                        ["of high quality", true],
                        ["of a high standard", true],
                        ["quality"],
                        ["superior"],
                      ]}
                    />
                  </Sense>
                </Senses>

                <PartOfSpeech>noun</PartOfSpeech>
                <Senses>
                  <Sense>
                    that which is <a href="#morally">morally</a> right; righteousness.
                    <Example>"a mysterious balance of good and evil"</Example>
                    <Similar
                      words={[
                        ["virtue"],
                        ["righteousness"],
                        ["virtuousness", true],
                        ["goodness"],
                        ["morality"],
                        ["ethicalness", true],
                      ]}
                    />
                  </Sense>
                </Senses>
              </Results>
            </Page>
            <VTrack />
            <HTrack />
          </Viewport>
        </Browser>
      </Stage>

      <Dock>
        {dockGroups.map((group, g) => (
          <React.Fragment key={g}>
            {g > 0 && <DockRule />}
            {group.map(({ name, Icon, running, badge }) => (
              <DockApp key={name} aria-label={name}>
                <Icon />
                {running && <RunningDot />}
                {badge && <Badge>{badge}</Badge>}
              </DockApp>
            ))}
          </React.Fragment>
        ))}
      </Dock>
    </Desktop>
  );
}
